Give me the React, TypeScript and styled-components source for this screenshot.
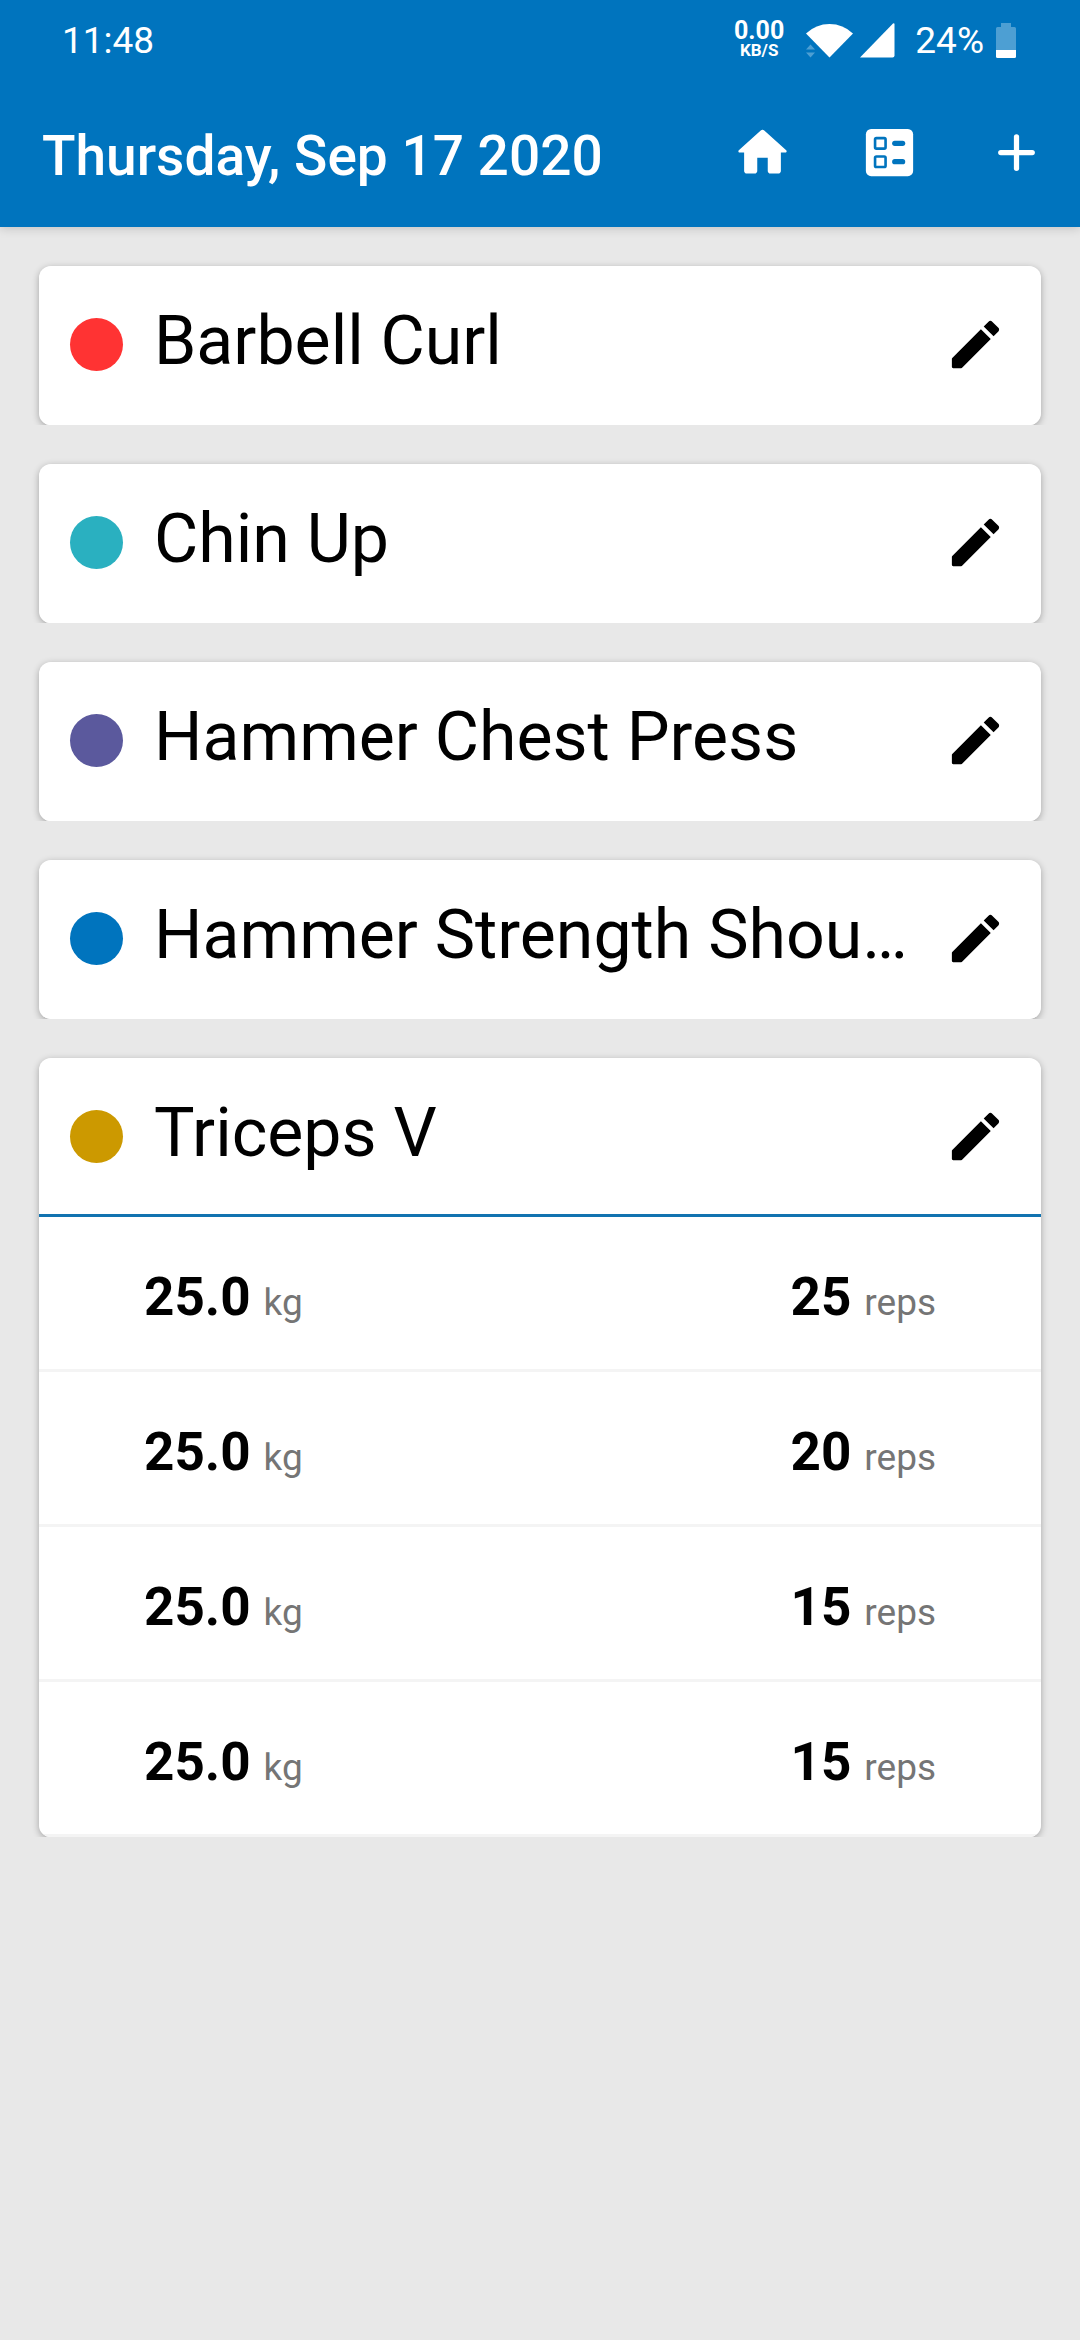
import React from "react";
import styled, { createGlobalStyle } from "styled-components";

const GlobalStyle = createGlobalStyle`
  *, *::before, *::after { box-sizing: border-box; }
  body {
    margin: 0;
    background: #e8e8e8;
    color: #000;
    font-family: Roboto, "Liberation Sans", sans-serif;
  }
`;

const Header = styled.header`
  background: #0074be;
  color: #fff;
  box-shadow: 0 1px 10px rgba(0, 0, 0, 0.18);
`;

const StatusBar = styled.div`
  display: flex;
  align-items: center;
  justify-content: space-between;
  height: 78px;
  padding: 4px 64px 0 62px;
  font-size: 37px;
  line-height: 44px;
`;

const StatusIcons = styled.div`
  display: flex;
  align-items: center;
`;

const NetSpeed = styled.div`
  display: flex;
  flex-direction: column;
  align-items: center;
  margin-right: 22px;
  padding-bottom: 4px;
  font-weight: 700;
`;

const SpeedValue = styled.span`
  font-size: 25px;
  line-height: 22px;
`;

const SpeedUnit = styled.span`
  font-size: 17px;
  line-height: 17px;
`;

const SignalGroup = styled.div`
  display: flex;
  align-items: center;
  gap: 7px;
  margin-right: 20px;
`;

const Battery = styled.svg`
  margin-left: 12px;
`;

const Toolbar = styled.div`
  display: flex;
  align-items: stretch;
  height: 149px;
  padding-left: 42px;
`;

const Title = styled.h1`
  flex: 1;
  align-self: center;
  margin: 0;
  padding-top: 6px;
  font-size: 55px;
  line-height: 64px;
  font-weight: 500;
  white-space: nowrap;
`;

const ToolButton = styled.button`
  display: flex;
  align-items: center;
  justify-content: center;
  width: 127px;
  padding: 0;
  border: 0;
  background: none;
  color: inherit;
  cursor: pointer;
`;

const Main = styled.main`
  display: flex;
  flex-direction: column;
  gap: 39px;
  padding: 39px;
`;

const Card = styled.section`
  overflow: hidden;
  border-radius: 12px;
  background: #fff;
`;

const CardShadow = styled.div`
  border-radius: 12px;
  box-shadow: 0 2px 7px rgba(0, 0, 0, 0.3);
  clip-path: inset(-12px -12px 0);
`;

const CardHeader = styled.div<{ $open: boolean }>`
  display: flex;
  align-items: center;
  gap: 31px;
  height: 159px;
  padding: 0 34px 0 31px;
  border-bottom: 3px solid ${(p) => (p.$open ? "#1173b0" : "#fff")};
`;

const Dot = styled.span<{ $color: string }>`
  flex: none;
  width: 53px;
  height: 53px;
  border-radius: 50%;
  background: ${(p) => p.$color};
`;

const Name = styled.h2`
  flex: 1;
  min-width: 0;
  margin: 0;
  padding-bottom: 6px;
  overflow: hidden;
  font-size: 68px;
  line-height: 80px;
  font-weight: 400;
  white-space: nowrap;
  text-overflow: ellipsis;
`;

const EditButton = styled.button`
  display: flex;
  flex: none;
  padding: 0;
  border: 0;
  background: none;
  color: #000;
  cursor: pointer;
`;

const Sets = styled.table`
  width: 100%;
  border-collapse: separate;
  border-spacing: 0;
`;

const SetCell = styled.td<{ $align: "left" | "right" }>`
  height: 155px;
  padding: 20px 105px 0;
  border-bottom: 3px solid #f4f4f4;
  text-align: ${(p) => p.$align};
  vertical-align: middle;
  line-height: 64px;
  white-space: nowrap;
`;

const Amount = styled.b`
  font-size: 53px;
  font-weight: 700;
`;

const Unit = styled.span`
  margin-left: 13px;
  color: #757575;
  font-size: 37px;
`;

const HomeIcon = () => (
  <svg width="63" height="63" viewBox="0 0 24 24" fill="currentColor" aria-hidden="true">
    <path d="M10 19v-5h4v5c0 .55.45 1 1 1h3c.55 0 1-.45 1-1v-7h1.7c.46 0 .68-.57.33-.87L12.67 3.6c-.38-.34-.96-.34-1.34 0l-8.36 7.53c-.34.3-.13.87.33.87H5v7c0 .55.45 1 1 1h3c.55 0 1-.45 1-1z" />
  </svg>
);

const BallotIcon = () => (
  <svg width="63" height="63" viewBox="0 0 24 24" aria-hidden="true">
    <rect x="3" y="3" width="18" height="18" rx="2" fill="currentColor" />
    <g fill="none" stroke="#0074be">
      <rect x="6.5" y="6.5" width="4" height="4" rx=".5" />
      <rect x="6.5" y="13.5" width="4" height="4" rx=".5" />
    </g>
    <g fill="#0074be">
      <rect x="13" y="7.5" width="5" height="2" rx="1" />
      <rect x="13" y="14.5" width="5" height="2" rx="1" />
    </g>
  </svg>
);

const PlusIcon = () => (
  <svg width="63" height="63" viewBox="0 0 24 24" fill="currentColor" aria-hidden="true">
    <rect x="5" y="11" width="14" height="2" rx="1" />
    <rect x="11" y="5" width="2" height="14" rx="1" />
  </svg>
);

const PencilIcon = () => (
  <svg width="63" height="63" viewBox="0 0 24 24" fill="currentColor" aria-hidden="true">
    <path d="M3 17.46v3.04c0 .28.22.5.5.5h3.04c.13 0 .26-.05.35-.15L17.81 9.94l-3.75-3.75L3.15 17.1c-.1.1-.15.22-.15.36zM20.71 7.04c.39-.39.39-1.02 0-1.41l-2.34-2.34c-.39-.39-1.02-.39-1.41 0l-1.83 1.83 3.75 3.75 1.83-1.83z" />
  </svg>
);

const WifiIcon = () => (
  <svg width="47" height="36" viewBox="0 0 47 36" fill="#fff" aria-hidden="true">
    <path d="M0 10.500Q10 1 23.500 1T47 10.500L23.500 34.500z" />
    <path d="M4.500 21.500l4.500 5H0zM0 29.500h9l-4.500 5z" fill="#0074be" stroke="#0074be" strokeWidth="3" />
    <path d="M4.500 21.500l4.500 5H0zM0 29.500h9l-4.500 5z" fill="#4d9fd3" />
  </svg>
);

const CellIcon = () => (
  <svg width="35" height="36" viewBox="0 0 35 36" fill="#fff" aria-hidden="true">
    <path d="M0 34.500L33 .6q1.500-1 1.500 1V32.500q0 2-2 2z" />
  </svg>
);

const BatteryIcon = () => (
  <Battery width="20" height="36" viewBox="0 0 20 36" aria-hidden="true">
    <path d="M5 0h10v4h3.500q1.500 0 1.500 1.500V27H0V5.500Q0 4 1.500 4H5z" fill="#4d9fd3" />
    <path d="M0 27h20v6.500q0 1.500-1.500 1.500h-17Q0 35 0 33.500z" fill="#fff" />
  </Battery>
);

type WorkoutSet = { weight: string; reps: number };
type Exercise = { name: string; color: string; sets?: WorkoutSet[] };

const exercises: Exercise[] = [
  { name: "Barbell Curl", color: "#ff3333" },
  { name: "Chin Up", color: "#2ab0c0" },
  { name: "Hammer Chest Press", color: "#5b599d" },
  { name: "Hammer Strength Shoulder Press", color: "#0074be" },
  {
    name: "Triceps V",
    color: "#cc9900",
    sets: [
      { weight: "25.0", reps: 25 },
      { weight: "25.0", reps: 20 },
      { weight: "25.0", reps: 15 },
      { weight: "25.0", reps: 15 },
    ],
  },
];

function ExerciseCard({ name, color, sets }: Exercise) {
  return (
    <CardShadow>
      <Card>
        <CardHeader $open={Boolean(sets)}>
          <Dot $color={color} />
          <Name>{name}</Name>
          <EditButton type="button" aria-label={`Edit ${name}`}>
            <PencilIcon />
          </EditButton>
        </CardHeader>
        {sets && (
          <Sets aria-label={`${name} sets`}>
            <tbody>
              {sets.map((set, i) => (
                <tr key={i}>
                  <SetCell $align="left">
                    <Amount>{set.weight}</Amount>
                    <Unit>kg</Unit>
                  </SetCell>
                  <SetCell $align="right">
                    <Amount>{set.reps}</Amount>
                    <Unit>reps</Unit>
                  </SetCell>
                </tr>
              ))}
            </tbody>
          </Sets>
        )}
      </Card>
    </CardShadow>
  );
}

export default function App() {
  return (
    <>
      <GlobalStyle />
      <Header>
        <StatusBar>
          <span>11:48</span>
          <StatusIcons>
            <NetSpeed>
              <SpeedValue>0.00</SpeedValue>
              <SpeedUnit>KB/S</SpeedUnit>
            </NetSpeed>
            <SignalGroup>
              <WifiIcon />
              <CellIcon />
            </SignalGroup>
            <span>24%</span>
            <BatteryIcon />
          </StatusIcons>
        </StatusBar>
        <Toolbar>
          <Title>Thursday, Sep 17 2020</Title>
          <ToolButton type="button" aria-label="Home">
            <HomeIcon />
          </ToolButton>
          <ToolButton type="button" aria-label="Workout list">
            <BallotIcon />
          </ToolButton>
          <ToolButton type="button" aria-label="Add exercise">
            <PlusIcon />
          </ToolButton>
        </Toolbar>
      </Header>
      <Main>
        {exercises.map((exercise) => (
          <ExerciseCard key={exercise.name} {...exercise} />
        ))}
      </Main>
    </>
  );
}
